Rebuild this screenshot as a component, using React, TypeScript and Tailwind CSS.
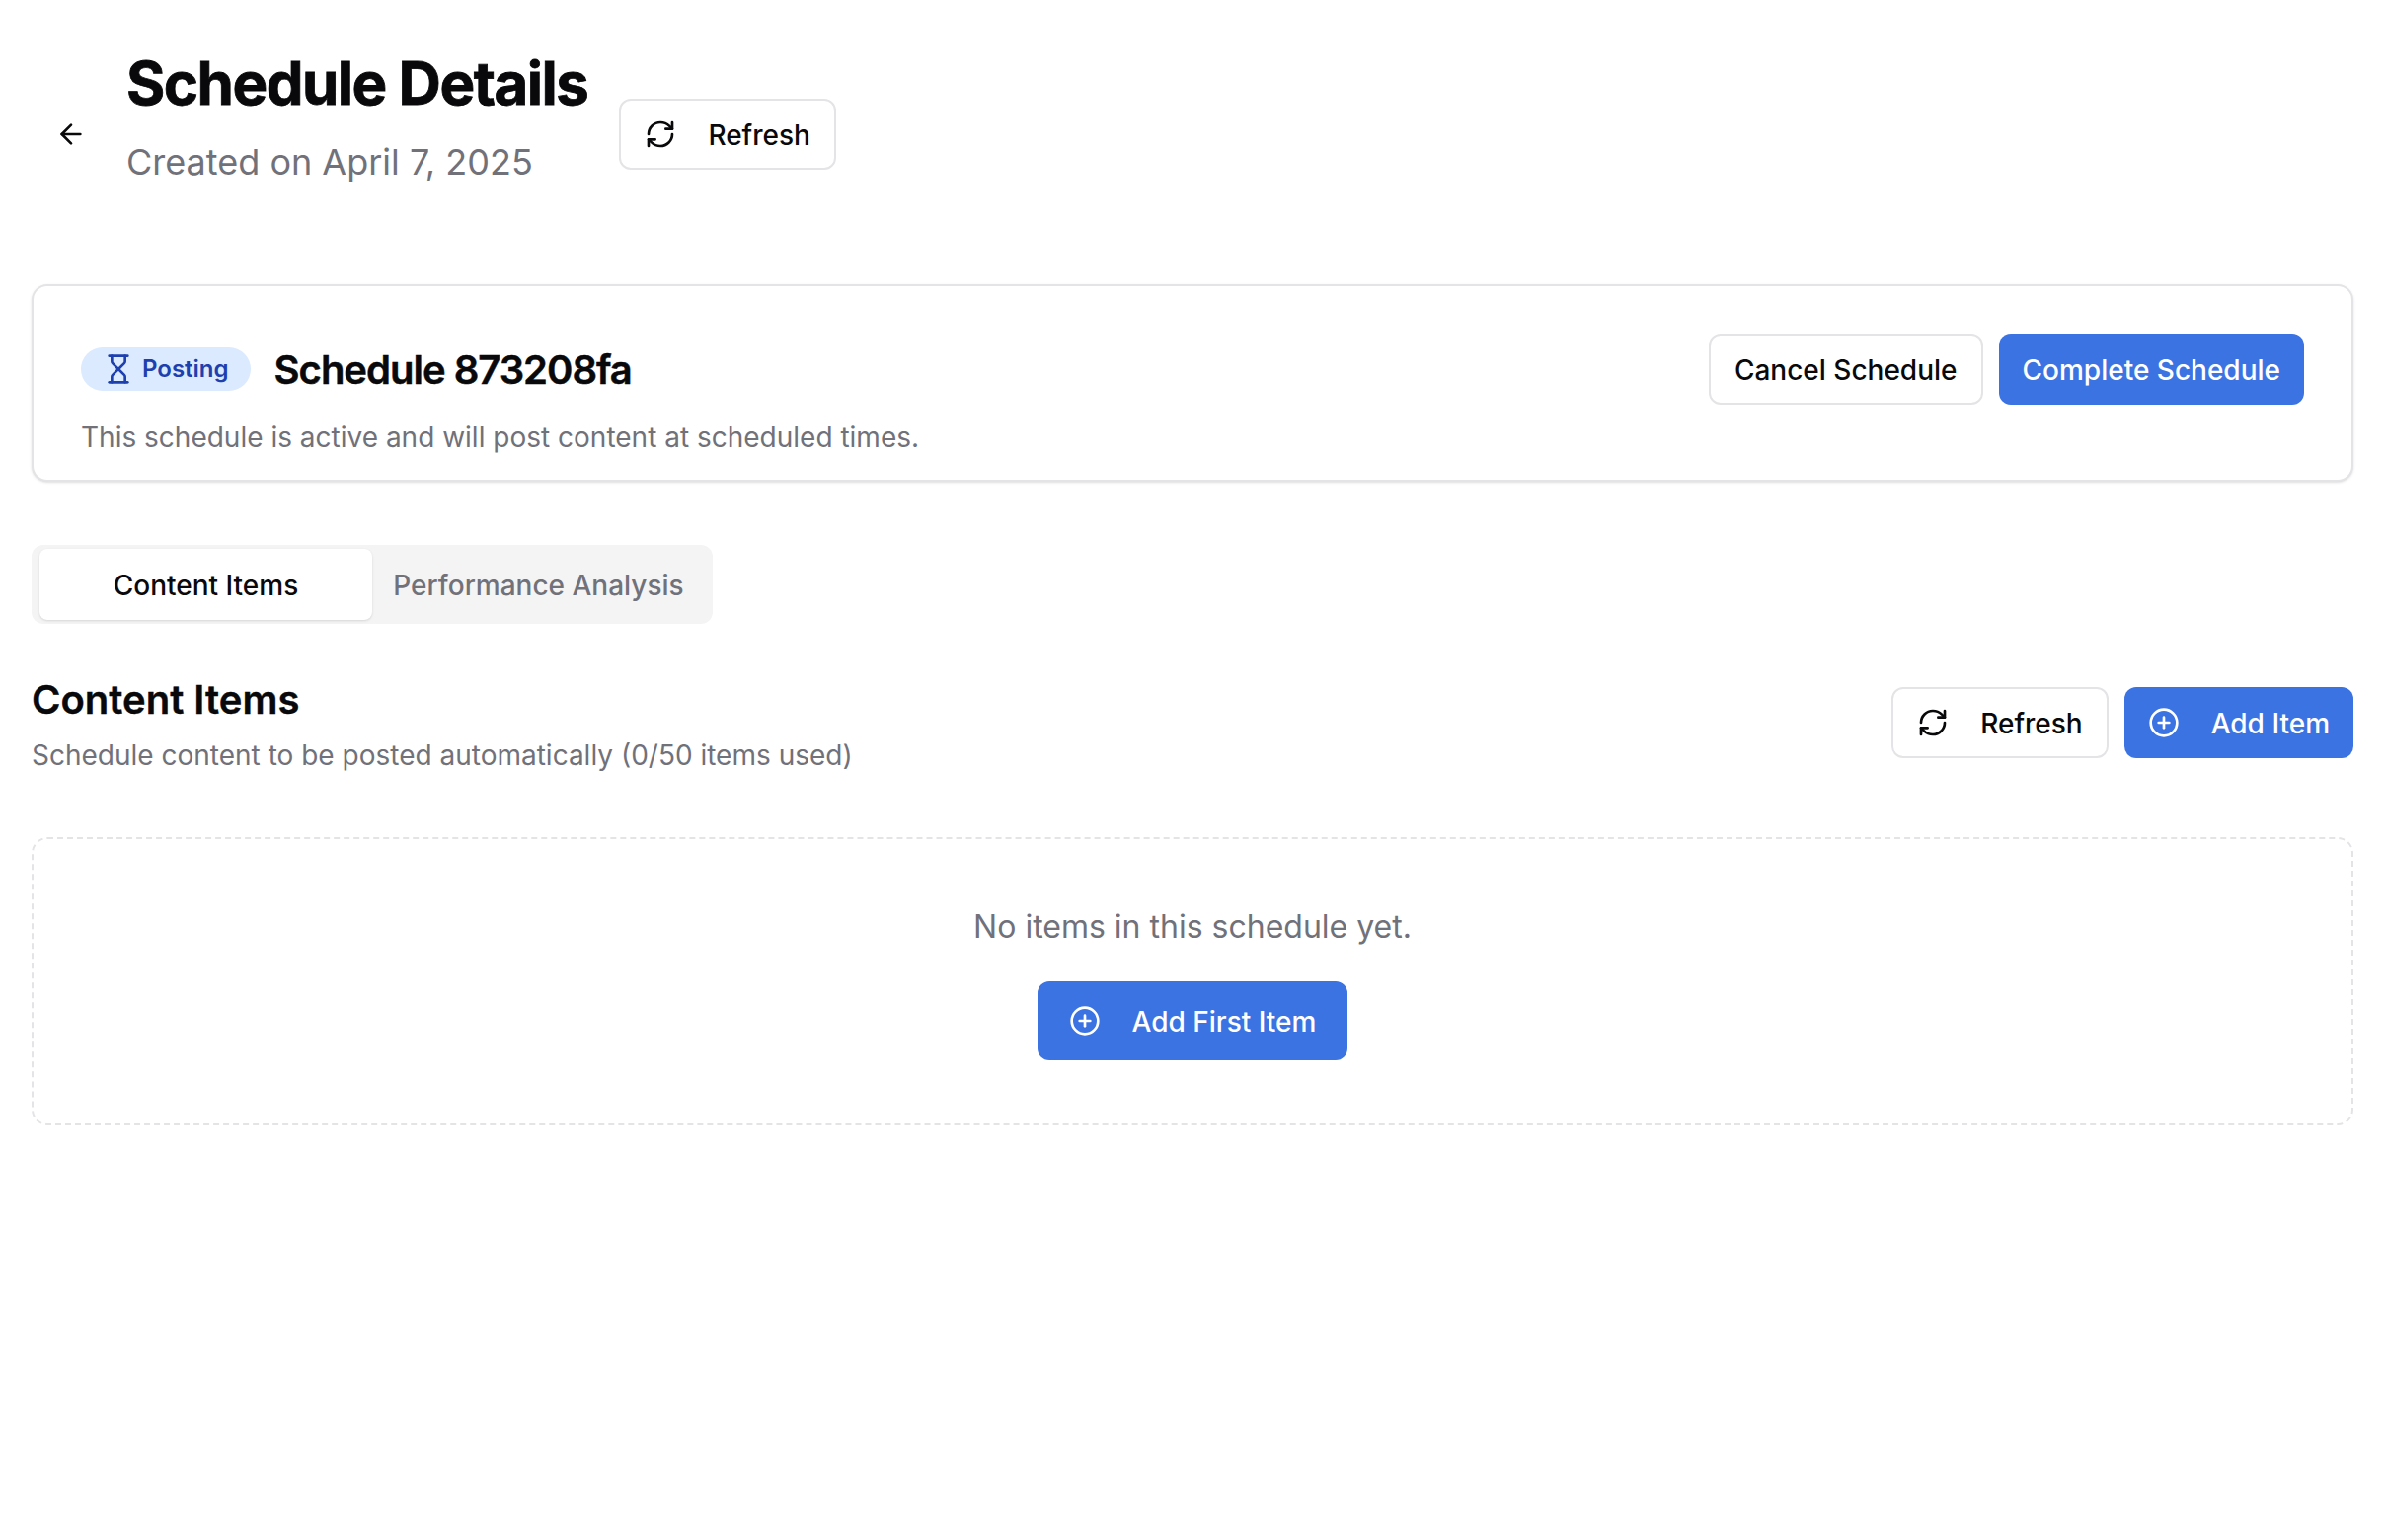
import React from "react";
import { ArrowLeft, CirclePlus, Hourglass, RefreshCw } from "lucide-react";

function OutlineButton({ children, className = "" }: { children: React.ReactNode; className?: string }) {
  return (
    <button className={`flex h-[72px] items-center rounded-[12px] border-2 border-[#e4e4e7] bg-white px-[30px] text-[28px] font-medium text-[#09090b] ${className}`}>
      {children}
    </button>
  );
}

function PrimaryButton({ children, className = "" }: { children: React.ReactNode; className?: string }) {
  return (
    <button className={`flex items-center rounded-[12px] bg-[#3c73e3] text-[28px] font-medium text-white ${className}`}>
      {children}
    </button>
  );
}

export default function App() {
  return (
    <div className="min-h-[1560px] bg-white p-8 font-['Inter',sans-serif] text-[#09090b]">
      <header className="mb-[48px] flex items-center">
        <ArrowLeft className="ml-[24px] mr-[40px] size-[32px]" strokeWidth={2} />
        <div className="pt-[16px] pb-[48px]">
          <h1 className="text-[60px] leading-[72px] font-bold tracking-[-1.5px] [-webkit-text-stroke:0.8px_#09090b]">Schedule Details</h1>
          <p className="mt-[16px] text-[36px] leading-[56px] text-[#71717a]">Created on April 7, 2025</p>
        </div>
        <OutlineButton className="ml-[32px] gap-[32px] !px-[24px]">
          <RefreshCw className="size-[32px]" />
          <span className="pt-[2px]">Refresh</span>
        </OutlineButton>
      </header>

      <section className="rounded-[16px] border-2 border-[#e4e4e7] bg-white px-[48px] pt-[48px] pb-[23px] shadow-sm">
        <div className="flex items-center justify-between">
          <div className="flex items-center gap-[24px]">
            <span className="flex h-[44px] items-center gap-[8px] rounded-full bg-[#dbeafe] pl-[22px] pr-[22px] text-[24px] font-semibold text-[#1e40af]">
              <Hourglass className="size-[32px]" />
              Posting
            </span>
            <h2 className="pt-[2px] text-[40px] leading-[56px] font-semibold tracking-[-1px] [-webkit-text-stroke:0.5px_#09090b]">Schedule 873208fa</h2>
          </div>
          <div className="flex gap-[16px]">
            <OutlineButton className="!px-[24px]"><span className="pt-[2px]">Cancel Schedule</span></OutlineButton>
            <PrimaryButton className="h-[72px] px-[24px]"><span className="pt-[2px]">Complete Schedule</span></PrimaryButton>
          </div>
        </div>
        <p className="mt-[12px] pt-[1px] text-[28px] leading-[40px] text-[#71717a]">This schedule is active and will post content at scheduled times.</p>
      </section>

      <div className="mt-[64px] flex h-[80px] w-[690px] items-center rounded-[12px] bg-[#f4f4f5] px-[8px] text-[28px] font-medium">
        <div className="flex h-[72px] w-[337px] items-center justify-center rounded-[8px] bg-white pt-[2px] shadow-sm">Content Items</div>
        <div className="flex h-[72px] flex-1 items-center justify-center pt-[2px] text-[#71717a]">Performance Analysis</div>
      </div>

      <div className="mt-[48px] flex items-start justify-between">
        <div>
          <h3 className="pt-[1px] text-[40px] leading-[56px] font-semibold [-webkit-text-stroke:0.4px_#09090b]">Content Items</h3>
          <p className="mt-[8px] text-[28px] leading-[40px] text-[#71717a]">Schedule content to be posted automatically (0/50 items used)</p>
        </div>
        <div className="mt-[16px] flex gap-[16px]">
          <OutlineButton className="gap-[32px] !px-[24px]">
            <RefreshCw className="size-[32px]" />
            <span className="pt-[2px]">Refresh</span>
          </OutlineButton>
          <PrimaryButton className="h-[72px] gap-[32px] px-[24px]">
            <CirclePlus className="size-[32px]" />
            <span className="pt-[2px]">Add Item</span>
          </PrimaryButton>
        </div>
      </div>

      <div className="mt-[63px] flex h-[292px] flex-col items-center rounded-[16px] border-2 border-dashed border-[#e4e4e7] pt-[65px]">
        <p className="text-[32px] leading-[48px] text-[#71717a]">No items in this schedule yet.</p>
        <PrimaryButton className="mt-[31px] h-[80px] gap-[32px] px-[32px]">
          <CirclePlus className="size-[32px]" />
          <span className="pt-[2px]">Add First Item</span>
        </PrimaryButton>
      </div>
    </div>
  );
}
